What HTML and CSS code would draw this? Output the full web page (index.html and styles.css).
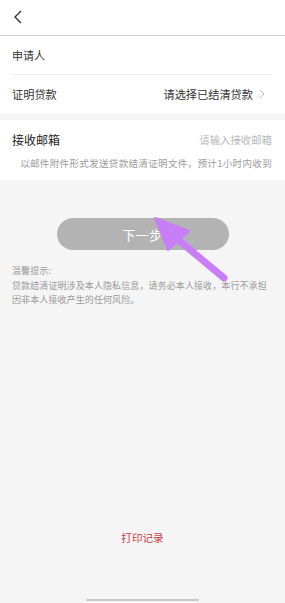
FILE: index.html
```html
<!DOCTYPE html>
<html>
<head>
    <meta charset="utf-8" />
    <title>贷款结清证明</title>
    <link rel="stylesheet" href="styles.css">
</head>
<body>
    <div class="page">
        <div class="topbar">
            <svg class="back" width="10" height="14" viewBox="0 0 10 14"><path d="M8 1 L2 7 L8 13" fill="none" stroke="#333" stroke-width="1.4"/></svg>
        </div>

        <div class="group">
            <div class="row divided"><span class="label">申请人</span></div>
            <div class="row pick">
                <span class="label">证明贷款</span>
                <span class="value">请选择已结清贷款
                    <svg width="6" height="10" viewBox="0 0 6 10"><path d="M1 1 L5 5 L1 9" fill="none" stroke="#bbb" stroke-width="1"/></svg>
                </span>
            </div>
        </div>

        <div class="group mail">
            <div class="row">
                <span class="label dark">接收邮箱</span>
                <span class="placeholder">请输入接收邮箱</span>
            </div>
            <div class="hint">以邮件附件形式发送贷款结清证明文件，预计1小时内收到</div>
        </div>

        <div class="actions">
            <div class="btn">下一步</div>
        </div>

        <div class="tips">
            <p>温馨提示:</p>
            <p>贷款结清证明涉及本人隐私信息，请务必本人接收，本行不承担因非本人接收产生的任何风险。</p>
        </div>

        <div class="spacer"></div>
        <div class="record">打印记录</div>
        <div class="home"></div>
    </div>

    <svg class="pointer" width="285" height="603" viewBox="0 0 285 603">
        <line x1="224" y1="278" x2="176" y2="238" stroke="#c77ef7" stroke-width="7" stroke-linecap="round"/>
        <polygon points="155,218 189,231 168,250" fill="#c77ef7" stroke="#c77ef7" stroke-width="2" stroke-linejoin="round"/>
    </svg>
</body>
</html>
```

FILE: styles.css
```css
body {
    margin: 0;
    background-color: #f5f5f5;
    font-family: "Noto Sans CJK SC", "Noto Sans", sans-serif;
    color: #333;
}

.page {
    width: 285px;
    height: 603px;
    display: flex;
    flex-direction: column;
    overflow: hidden;
}

.topbar {
    height: 36px;
    background: #fff;
    border-bottom: 1px solid #cfcfcf;
    display: flex;
    align-items: center;
    padding-left: 13px;
    box-sizing: border-box;
    flex-shrink: 0;
}
.back {
    margin-top: -2px;
}

.group {
    background: #fff;
    padding: 0 13px 0 12px;
}
.group.mail {
    margin-top: 7px;
    padding-bottom: 11px;
}

.row {
    height: 38px;
    display: flex;
    align-items: center;
    justify-content: space-between;
    font-size: 11px;
}
.row.divided {
    border-bottom: 1px solid #efefef;
}
.row.pick {
    margin-right: 7px;
    font-size: 11.2px;
}

.label.dark {
    font-size: 12px;
    color: #222;
}

.value {
    display: flex;
    align-items: center;
    gap: 6px;
    color: #333;
}

.placeholder {
    font-size: 10.4px;
    color: #b8b8b8;
}

.hint {
    text-align: right;
    font-size: 9.5px;
    letter-spacing: 0.35px;
    color: #9a9a9a;
    margin-top: -1px;
    line-height: 12px;
}

.actions {
    display: flex;
    justify-content: center;
    padding-top: 38px;
}
.btn {
    width: 172px;
    height: 32px;
    border-radius: 16px;
    background: #b3b3b3;
    color: #fff;
    font-size: 13px;
    letter-spacing: 0.5px;
    display: flex;
    align-items: center;
    justify-content: center;
}

.tips {
    padding: 14px 12px 0 12px;
    font-size: 9px;
    letter-spacing: 0.1px;
    color: #9a9a9a;
    line-height: 14.5px;
}
.tips p {
    margin: 0;
}

.spacer {
    flex: 1;
}

.record {
    text-align: center;
    font-size: 10.6px;
    color: #cc3a42;
    padding-bottom: 54px;
}

.home {
    width: 113px;
    height: 2px;
    border-radius: 1px;
    background: #c8c8c8;
    margin: 0 auto 2px auto;
}

.pointer {
    position: absolute;
    left: 0;
    top: 0;
    pointer-events: none;
}
```
